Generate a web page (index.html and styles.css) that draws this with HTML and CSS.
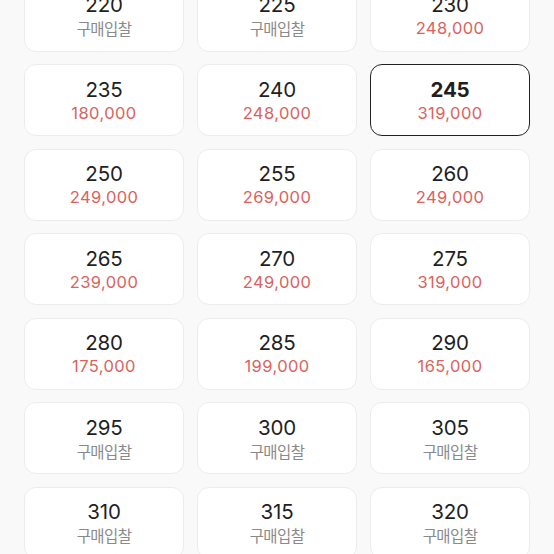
FILE: index.html
```html
<!DOCTYPE html>
<html lang="ko">
<head>
<meta charset="utf-8">
<link rel="stylesheet" href="styles.css">
</head>
<body>
<div class="grid">
  <div class="card"><div class="size">220</div><div class="bid">구매입찰</div></div>
  <div class="card"><div class="size">225</div><div class="bid">구매입찰</div></div>
  <div class="card"><div class="size">230</div><div class="price">248,000</div></div>
  <div class="card"><div class="size">235</div><div class="price">180,000</div></div>
  <div class="card"><div class="size">240</div><div class="price">248,000</div></div>
  <div class="card selected"><div class="size">245</div><div class="price">319,000</div></div>
  <div class="card"><div class="size">250</div><div class="price">249,000</div></div>
  <div class="card"><div class="size">255</div><div class="price">269,000</div></div>
  <div class="card"><div class="size">260</div><div class="price">249,000</div></div>
  <div class="card"><div class="size">265</div><div class="price">239,000</div></div>
  <div class="card"><div class="size">270</div><div class="price">249,000</div></div>
  <div class="card"><div class="size">275</div><div class="price">319,000</div></div>
  <div class="card"><div class="size">280</div><div class="price">175,000</div></div>
  <div class="card"><div class="size">285</div><div class="price">199,000</div></div>
  <div class="card"><div class="size">290</div><div class="price">165,000</div></div>
  <div class="card"><div class="size">295</div><div class="bid">구매입찰</div></div>
  <div class="card"><div class="size">300</div><div class="bid">구매입찰</div></div>
  <div class="card"><div class="size">305</div><div class="bid">구매입찰</div></div>
  <div class="card"><div class="size">310</div><div class="bid">구매입찰</div></div>
  <div class="card"><div class="size">315</div><div class="bid">구매입찰</div></div>
  <div class="card"><div class="size">320</div><div class="bid">구매입찰</div></div>
</div>
</body>
</html>
```
FILE: styles.css
```css
html, body {
  margin: 0;
  padding: 0;
  background: #f9f9f9;
  overflow: hidden;
  height: 554px;
}
body {
  font-family: Inter, "Noto Sans", "Noto Sans CJK KR", sans-serif;
  color: #222;
}
.grid {
  display: grid;
  grid-template-columns: repeat(3, 1fr);
  column-gap: 13px;
  row-gap: 12.5px;
  padding: 0 24px;
  margin-top: -20.5px;
}
.card {
  box-sizing: border-box;
  height: 72px;
  background: #fff;
  border: 1px solid #ececec;
  border-radius: 12px;
  display: flex;
  flex-direction: column;
  align-items: center;
  justify-content: center;
  gap: 1px;
}
.card.selected {
  border: 1.5px solid #222;
}
.size {
  font-size: 20.5px;
  line-height: 24px;
  color: #1f1f1f;
  letter-spacing: -0.2px;
}
.selected .size {
  font-weight: 700;
}
.price {
  font-size: 16.5px;
  line-height: 20px;
  color: #db625e;
  letter-spacing: 0.4px;
}
.bid {
  font-family: "Noto Sans CJK KR", sans-serif;
  font-size: 15.5px;
  line-height: 20px;
  color: #8a8a8a;
  letter-spacing: -0.6px;
}
```
